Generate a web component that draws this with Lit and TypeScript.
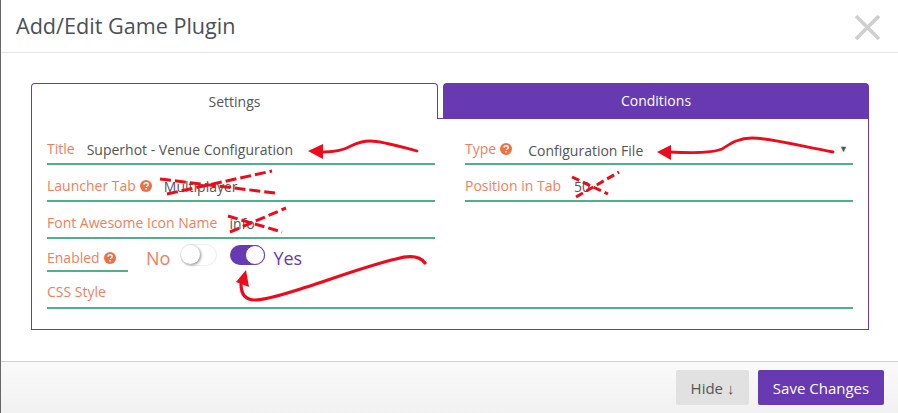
import { LitElement, html, css, svg } from "lit";
import { customElement } from "lit/decorators.js";

const help = html`<svg class="help" viewBox="0 0 12 12" aria-hidden="true"><circle cx="6" cy="6" r="6" fill="#ef7044"/><path d="M3.9 4.6c.1-1.2 1-1.9 2.2-1.9s2.1.7 2.1 1.7c0 .8-.5 1.2-1.1 1.6-.5.3-.6.5-.6 1" fill="none" stroke="#fff" stroke-width="1.4"/><rect x="5.3" y="8" width="1.5" height="1.5" fill="#fff"/></svg>`;

const marks = svg`
  <g fill="none" stroke="#ee0a1a" stroke-linecap="round" stroke-linejoin="round">
    <path stroke-width="2.8" d="M417 151C398 146 382 141 370 141C358 141 352 146 344 149C336 152 328 152 316 152"/>
    <path stroke-width="2.8" d="M833 152C800 146 770 138 752 138C738 138 730 144 722 149C712 153 695 153 668 152"/>
    <path stroke-width="3.2" d="M425 263C420 256 410 255 396 259C370 265 340 276 310 286C290 292 268 300 255 300C245 300 241 294 241 284"/>
    <g stroke-width="3" stroke-linecap="butt">
      <path d="M160 179L275 193" stroke-dasharray="11 4"/><path d="M167 194L272 171" stroke-dasharray="11 4"/>
      <path d="M228 216L282 232" stroke-dasharray="10 4"/><path d="M230 232L286 208" stroke-dasharray="10 4"/>
      <path d="M572 177L608 194" stroke-dasharray="8 4"/><path d="M576 197L619 172" stroke-dasharray="8 4"/>
    </g>
  </g>
  <g fill="#ee0a1a">
    <path d="M308 151L323 144L323 159Z"/>
    <path d="M657 152L671 145L671 160Z"/>
    <path d="M236 282L246 270L249 287Z"/>
  </g>`;

@customElement("app-root")
export class AppRoot extends LitElement {
  static styles = css`
    :host { display: block; width: 898px; height: 413px; position: relative; overflow: hidden; background: #fff; font-family: "Open Sans", sans-serif; color: #555; box-sizing: border-box; border-left: 1px solid #666; }
    * { box-sizing: border-box; }
    .modal { height: 413px; display: flex; flex-direction: column; }
    header { height: 53px; flex: none; display: flex; align-items: center; justify-content: space-between; padding: 0 17px 2px 15px; border-bottom: 1px solid #e5e5e5; }
    h1 { margin: 0; font-size: 21.6px; font-weight: 400; color: #4a5058; }
    .close { width: 27px; height: 27px; margin-top: 4px; }
    .body { flex: 1; padding: 30px 29px 0 30px; }
    .tabs { display: flex; gap: 5px; height: 36px; }
    .tab { display: flex; align-items: center; justify-content: center; font-size: 14px; border-radius: 4px 4px 0 0; }
    .tab.on { width: 407px; border: 1px solid #673ab1; border-bottom: 0; background: #fff; color: #555; position: relative; z-index: 1; padding-bottom: 1px; }
    .tab.off { flex: 1; background: #673ab1; color: #fff; padding-bottom: 1px; }
    .panel { height: 212px; margin-top: -1px; border: 1px solid #673ab1; padding: 0 15px; display: flex; flex-direction: column; }
    .grid { display: grid; grid-template-columns: 388px 388px; column-gap: 30px; grid-auto-rows: 37px; margin-top: 9px; }
    .field { display: flex; align-items: flex-start; border-bottom: 2px solid #4eb18a; font-size: 14px; line-height: 19px; padding-top: 11px; height: 37px; }
    .field label { color: #ef7f60; white-space: nowrap; display: inline-flex; align-items: center; gap: 4px; }
    .val { color: #555; white-space: nowrap; position: relative; top: 1px; }
    .help { width: 12px; height: 12px; flex: none; }
    .title .val { margin-left: 12px; }
    .tab-f .val { margin-left: 12px; }
    .icon-f .val { margin-left: 12px; }
    .type .val { margin-left: 16px; top: 2px; }
    .pos .val { margin-left: 13px; }
    .caret { margin-left: auto; margin-right: 5px; font-size: 9px; color: #555; }
    .toggle-row { display: flex; height: 33px; align-items: flex-start; }
    .toggle-row .field { width: 81px; height: 33px; padding-top: 9px; }
    .no, .yes { font-size: 18px; line-height: 20px; margin-top: 9px; }
    .no { color: #ef7f60; margin-left: 18px; }
    .yes { color: #673ab1; margin-left: 8px; margin-top: 9px; }
    .sw { width: 37px; height: 22px; border-radius: 11px; margin-top: 5px; position: relative; }
    .sw.off { margin-left: 10px; border: 1px solid #eee; background: #fff; }
    .sw.off i { position: absolute; left: 0; top: 0; width: 19px; height: 19px; border-radius: 50%; background: #fff; box-shadow: 1px 1px 3px rgba(0,0,0,.45); }
    .sw.on { margin-left: 13px; width: 35px; height: 20px; margin-top: 6px; background: #673ab1; border-radius: 10px; }
    .sw.on i { position: absolute; right: 0; top: 0; width: 20px; height: 20px; border-radius: 50%; background: #fff; border: 1px solid #673ab1; }
    .css-f { padding-top: 10px; }
    footer { height: 52px; flex: none; border-top: 1px solid #cfcfcf; background: linear-gradient(#fafafa, #f1f1f1); display: flex; justify-content: flex-end; align-items: flex-start; gap: 9px; padding: 8px 14px 0 0; }
    button { height: 35px; border: 0; border-radius: 2px; font: 400 15px "Open Sans", sans-serif; padding: 0; }
    .hide { width: 73px; background: #e1e1e1; color: #555; }
    .save { width: 126px; background: #673ab1; color: #fff; }
    .marks { position: absolute; left: -1px; top: 0; width: 898px; height: 413px; pointer-events: none; }
  `;

  render() {
    return html`
      <div class="modal">
        <header>
          <h1>Add/Edit Game Plugin</h1>
          <svg class="close" viewBox="0 0 27 27" aria-label="Close"><path d="M2 2L25 25M25 2L2 25" stroke="#cfcfcf" stroke-width="3.8" fill="none"/></svg>
        </header>
        <div class="body">
          <div class="tabs">
            <div class="tab on">Settings</div>
            <div class="tab off">Conditions</div>
          </div>
          <div class="panel">
            <div class="grid">
              <div class="field title"><label>Title</label><span class="val">Superhot - Venue Configuration</span></div>
              <div class="field type"><label>Type ${help}</label><span class="val">Configuration File</span><span class="caret">▼</span></div>
              <div class="field tab-f"><label>Launcher Tab ${help}</label><span class="val">Multiplayer</span></div>
              <div class="field pos"><label>Position in Tab</label><span class="val">50</span></div>
              <div class="field icon-f"><label>Font Awesome Icon Name</label><span class="val">info</span></div>
            </div>
            <div class="toggle-row">
              <div class="field"><label>Enabled ${help}</label></div>
              <span class="no">No</span>
              <div class="sw off"><i></i></div>
              <div class="sw on"><i></i></div>
              <span class="yes">Yes</span>
            </div>
            <div class="field css-f"><label>CSS Style</label></div>
          </div>
        </div>
        <footer>
          <button class="hide">Hide ↓</button>
          <button class="save">Save Changes</button>
        </footer>
      </div>
      <svg class="marks" viewBox="0 0 898 413" aria-hidden="true">${marks}</svg>
    `;
  }
}
